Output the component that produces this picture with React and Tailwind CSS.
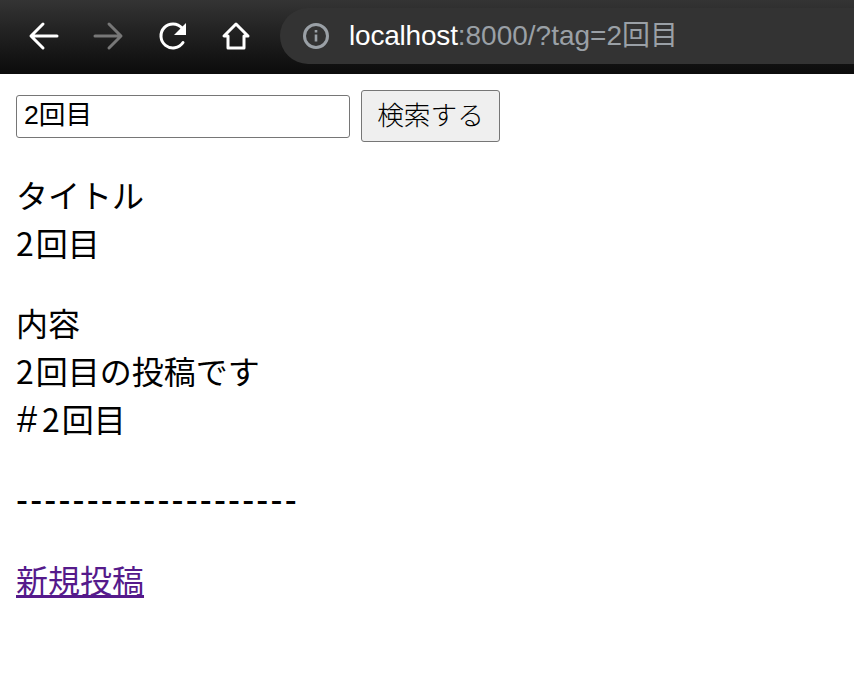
const latin = 'font-["Liberation_Sans","Noto_Sans_CJK_JP",sans-serif]';

function Two() {
  return <span className="tracking-[2px]">2</span>;
}

export default function App() {
  return (
    <div className='min-h-screen bg-white text-[32px] leading-[48px] text-black font-["Noto_Sans_CJK_JP","Liberation_Sans",sans-serif]'>
      {/* browser toolbar */}
      <div className="h-[74px] flex items-start bg-gradient-to-b from-[#343434] to-[#0c0c0c]">
        <div className="flex items-center h-[72px] pl-[26px]">
          <svg width="36" height="36" viewBox="0 0 36 36" fill="none" stroke="#fff" strokeWidth="3" strokeLinecap="round" strokeLinejoin="round">
            <path d="M31 18H6M17 6L5 18l12 12" />
          </svg>
          <svg className="ml-[28px]" width="36" height="36" viewBox="0 0 36 36" fill="none" stroke="#777" strokeWidth="3" strokeLinecap="round" strokeLinejoin="round">
            <path d="M5 18h25M19 6l12 12-12 12" />
          </svg>
          <svg className="ml-[30px]" width="36" height="36" viewBox="0 0 36 36" fill="none">
            <path d="M27 24.5A12 12 0 1 1 26 10" stroke="#fff" strokeWidth="3" strokeLinecap="round" />
            <path d="M30 5v12H18z" fill="#fff" />
          </svg>
          <svg className="ml-[26px]" width="36" height="36" viewBox="0 0 36 36" fill="none" stroke="#fff" strokeWidth="3" strokeLinejoin="round">
            <path d="M18 6L6 18h4v12h16V18h4z" />
          </svg>
        </div>
        <div className="ml-[26px] mt-[8px] flex-1 h-[56px] flex items-center rounded-l-[28px] bg-[#333333] pl-[22px]">
          <svg width="28" height="28" viewBox="0 0 28 28" fill="none">
            <circle cx="14" cy="14" r="11.5" stroke="#9aa0a6" strokeWidth="3" />
            <path d="M14 12.5v7M14 8v2.4" stroke="#9aa0a6" strokeWidth="2.6" />
          </svg>
          <span className='ml-[19px] text-[28px] text-[#9aa0a6] font-["Liberation_Sans","Noto_Sans_CJK_JP",sans-serif]'>
            <span className="text-white tracking-[-0.2px]">localhost</span>:8000/?tag=2回目
          </span>
        </div>
      </div>

      <main className="px-4 pt-4">
        <form className="flex items-center h-[52px]">
          <input
            defaultValue="2回目"
            className='w-[334px] h-[43px] mt-[1px] px-[7px] pb-[3px] text-[26.67px] border border-[#767676] rounded-[3px] outline-none font-["Liberation_Sans","Noto_Sans_CJK_JP",sans-serif]'
          />
          <button type="button" className="ml-[11px] w-[139px] h-[52px] pb-[4px] text-[26.67px] leading-[32px] font-light bg-[#efefef] border border-[#767676] rounded-[3px]">
            検索する
          </button>
        </form>

        <div className="mt-[28px]">
          <p>タイトル</p>
          <p><Two />回目</p>
        </div>
        <div className="mt-8">
          <p>内容</p>
          <p><Two />回目の投稿です</p>
          <p>
            <span className={`${latin} ml-[1px] text-[36px] tracking-[5px]`}>#</span><Two />回目
          </p>
        </div>
        <p className={`${latin} mt-8 text-[36px] tracking-[2.15px]`}>--------------------</p>
        <p className="mt-[31px]">
          <a href="#" className="underline text-[#551a8b]">新規投稿</a>
        </p>
      </main>
    </div>
  );
}
